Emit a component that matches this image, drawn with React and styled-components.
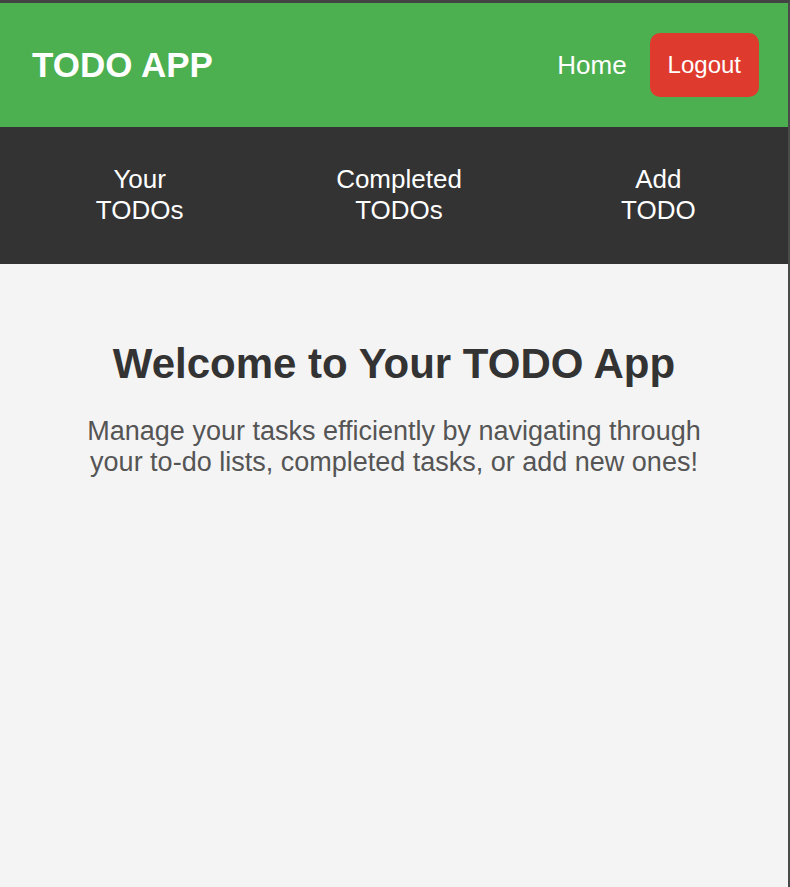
import React from "react";
import styled, { createGlobalStyle } from "styled-components";

const GlobalStyle = createGlobalStyle`
  html, body { margin: 0; padding: 0; }
  body {
    font-family: "Liberation Sans", Arial, sans-serif;
    background: #f4f4f4;
  }
  * { box-sizing: border-box; }
`;

const Frame = styled.div`
  min-height: 100vh;
  background: #f4f4f4;
  border-top: 3px solid #434343;
  border-right: 2px solid #4a4a4a;
  display: flex;
  flex-direction: column;
`;

const Header = styled.header`
  background: #4caf50;
  height: 124px;
  padding: 0 29px 0 32px;
  display: flex;
  align-items: center;
  justify-content: space-between;
`;

const Brand = styled.h1`
  margin: 0;
  color: #fff;
  font-size: 35px;
  font-weight: 700;
`;

const HeaderActions = styled.div`
  display: flex;
  align-items: center;
  gap: 23px;
`;

const HomeLink = styled.a`
  color: #fff;
  font-size: 26px;
  text-decoration: none;
  cursor: pointer;
`;

const LogoutButton = styled.button`
  background: #df3a2e;
  color: #fff;
  border: none;
  border-radius: 10px;
  font-family: inherit;
  font-size: 24px;
  padding: 18px 18px;
  line-height: 28px;
  cursor: pointer;
`;

const NavBar = styled.nav`
  background: #333;
  padding: 37px 0 38px 10px;
  display: grid;
  grid-template-columns: repeat(3, 1fr);
`;

const NavItem = styled.a`
  justify-self: center;
  width: min-content;
  text-align: center;
  color: #fff;
  font-size: 26px;
  line-height: 31px;
  text-decoration: none;
  cursor: pointer;
`;

const Main = styled.main`
  padding: 76px 20px 40px;
  text-align: center;
`;

const Title = styled.h2`
  margin: 0 0 28px;
  color: #333;
  font-size: 42px;
  font-weight: 700;
  line-height: 48px;
`;

const Lead = styled.p`
  margin: 0 auto;
  max-width: 640px;
  color: #555;
  font-size: 27px;
  line-height: 31px;
`;

export default function App() {
  return (
    <>
      <GlobalStyle />
      <Frame>
        <Header>
          <Brand>TODO APP</Brand>
          <HeaderActions>
            <HomeLink>Home</HomeLink>
            <LogoutButton>Logout</LogoutButton>
          </HeaderActions>
        </Header>
        <NavBar>
          <NavItem>Your TODOs</NavItem>
          <NavItem>Completed TODOs</NavItem>
          <NavItem>Add TODO</NavItem>
        </NavBar>
        <Main>
          <Title>Welcome to Your TODO App</Title>
          <Lead>
            Manage your tasks efficiently by navigating through your to-do
            lists, completed tasks, or add new ones!
          </Lead>
        </Main>
      </Frame>
    </>
  );
}
